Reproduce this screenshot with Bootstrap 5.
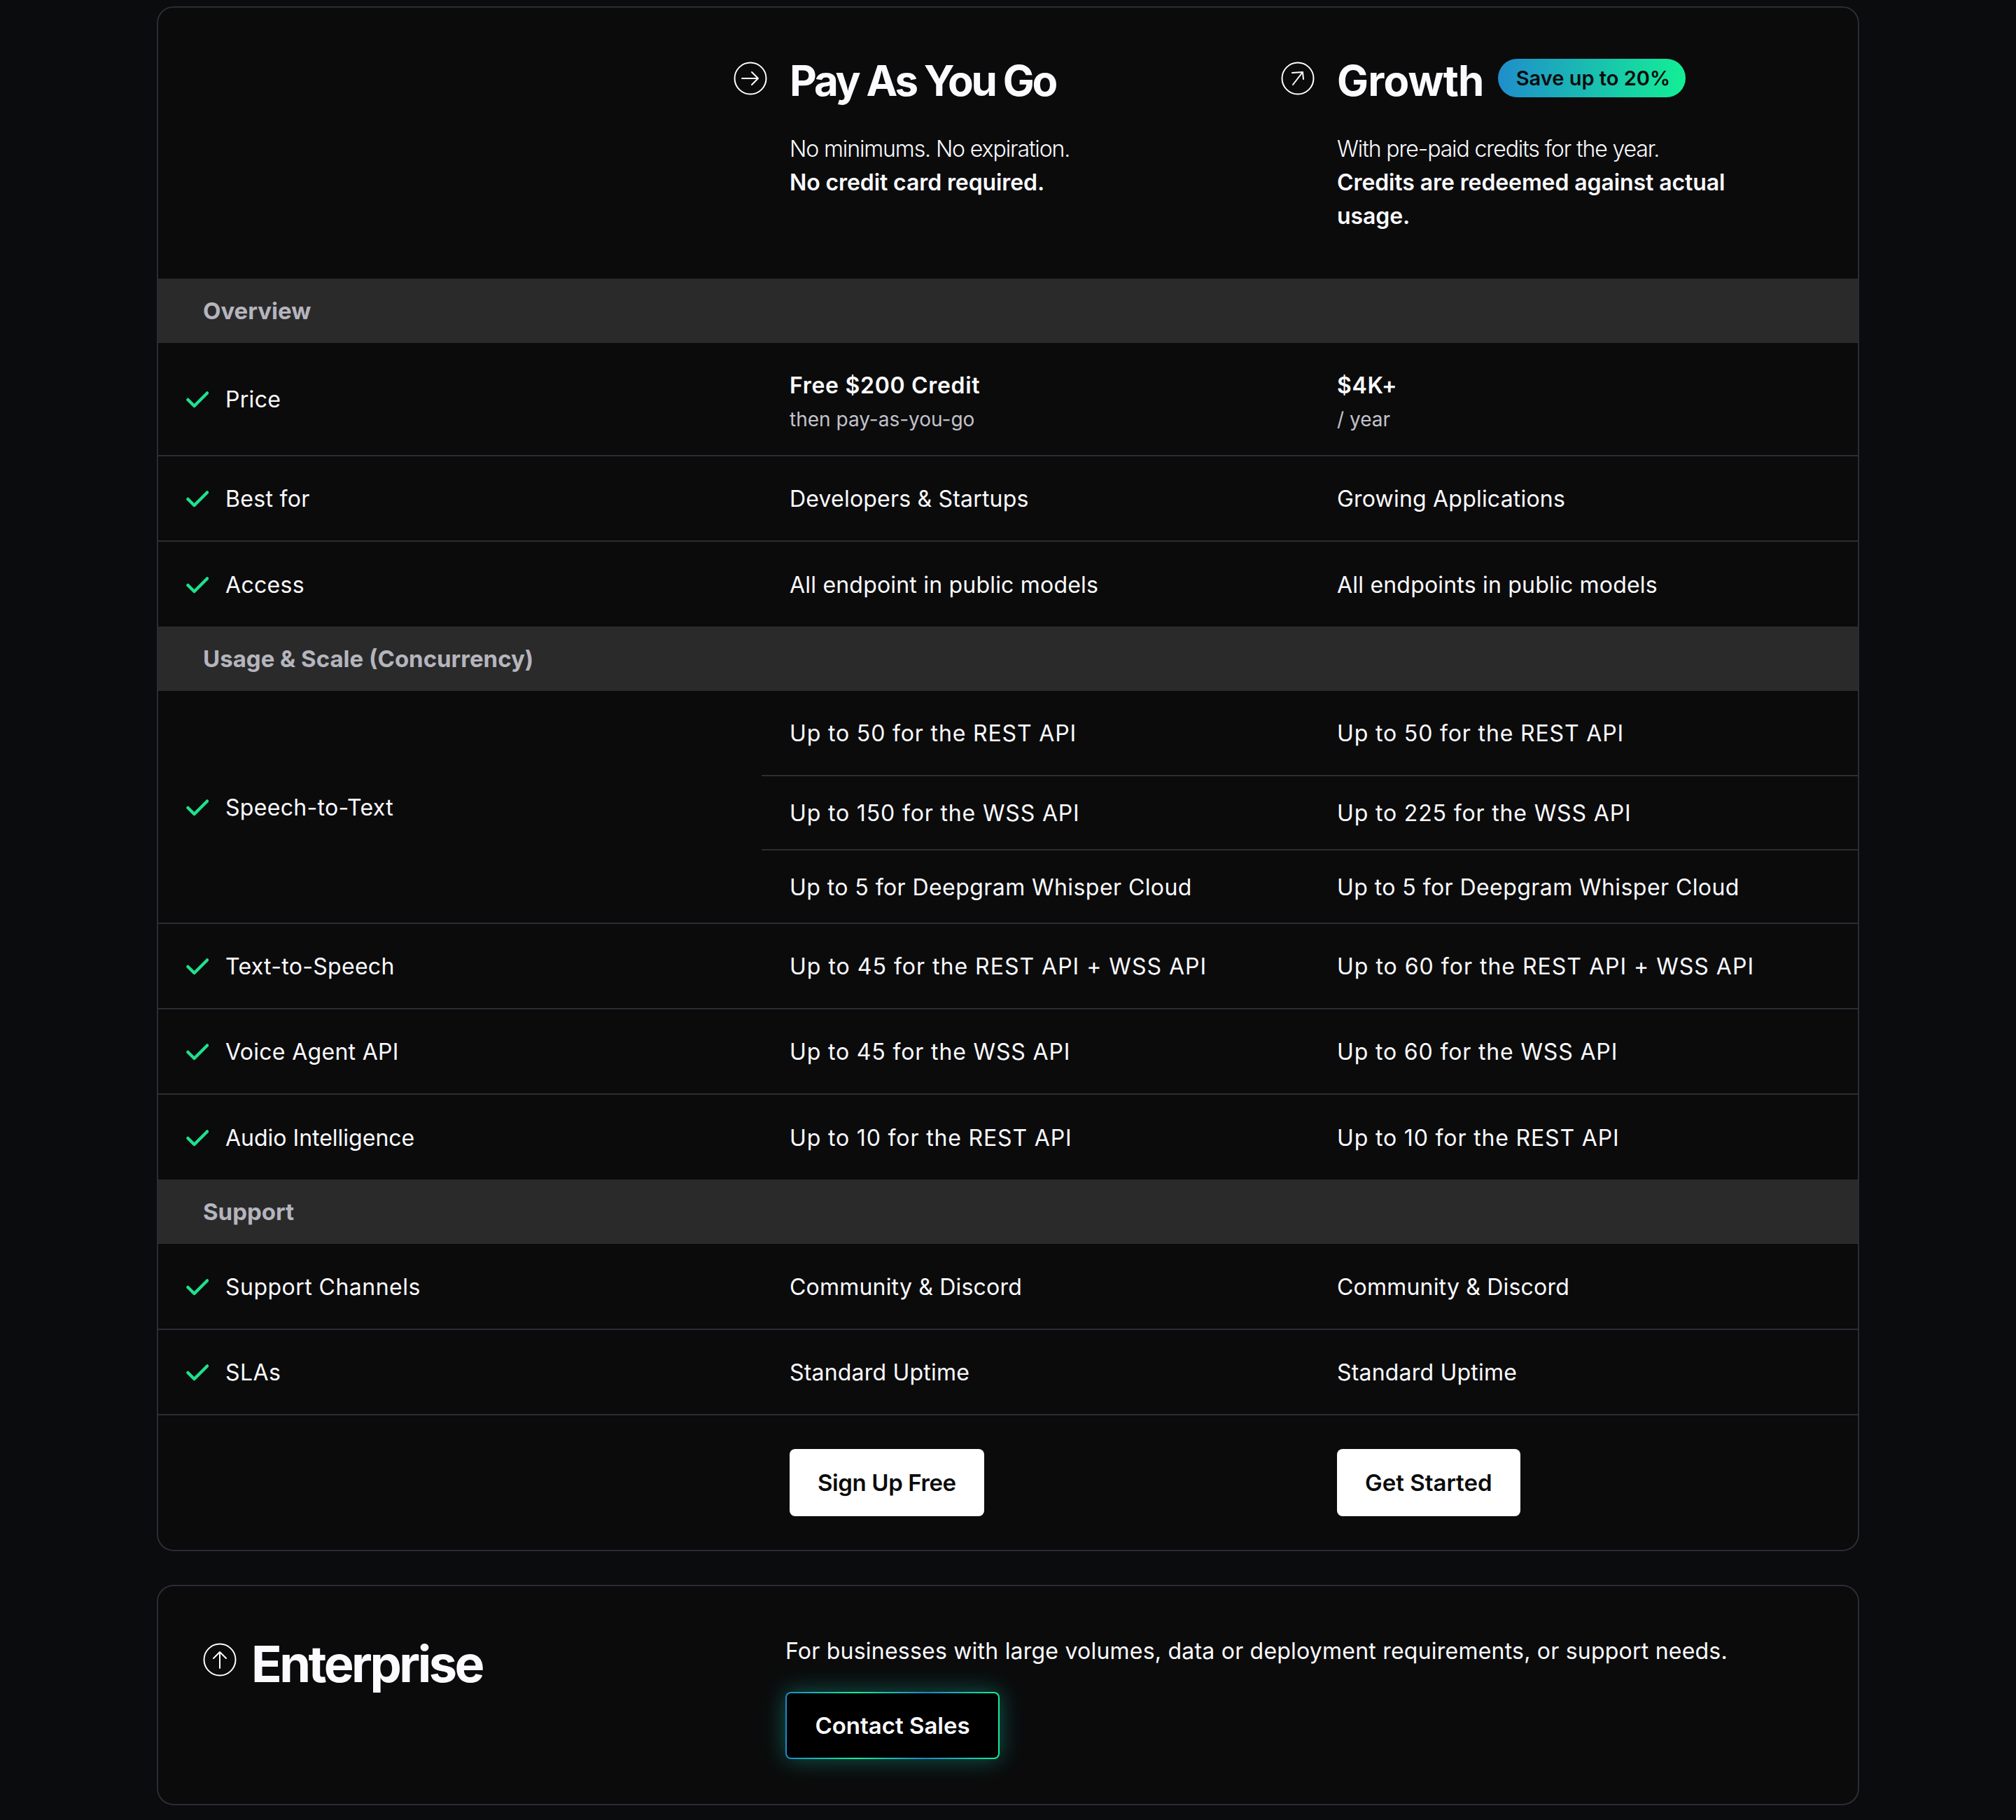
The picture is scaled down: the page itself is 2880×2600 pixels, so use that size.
<!DOCTYPE html>
<html lang="en">
<head>
    <meta charset="UTF-8">
    <meta name="viewport" content="width=device-width, initial-scale=1.0">
    <title>Pricing | Plans</title>
    <link rel="stylesheet" href="https://cdn.jsdelivr.net/npm/bootstrap@5.3.0/dist/css/bootstrap.min.css">
    <style>
        body {
            background: #0b0c0e;
            color: #fbfbff;
            font-family: "Inter", "Liberation Sans", sans-serif;
            font-size: 32px;
            line-height: 48px;
        }

        .page-wrap {
            width: 2432px;
            margin: 0 auto;
            padding-top: 9px;
        }

        .plan-card {
            background: #0b0b0c;
            border: 2px solid #2c2c33;
            border-radius: 24px;
            overflow: hidden;
        }

        /* comparison table */
        .plan-table {
            table-layout: fixed;
            width: 100%;
            margin: 0;
            color: #fbfbff;
            --bs-table-bg: transparent;
            --bs-table-color: #fbfbff;
            letter-spacing: 0.2px;
        }
        .plan-table td, .plan-table th {
            border: 0;
            border-bottom: 2px solid #2c2c33;
            padding: 2px 40px 0;
            vertical-align: middle;
            font-weight: 400;
            box-shadow: none;
        }
        .plan-table tr:last-child td { border-bottom: 0; }
        .col-label { width: 862px; }
        .col-payg { width: 782px; }

        .head-row td {
            height: 387px;
            vertical-align: top;
            padding-top: 68px;
            border-bottom: 0;
        }
        .head-cell { position: relative; }
        .plan-icon { position: absolute; left: -40px; top: 77px; width: 48px; height: 48px; }
        .plan-title {
            font-size: 60px;
            font-weight: 700;
            line-height: 72px;
            height: 72px;
            letter-spacing: -3.2px;
            margin: 0;
        }
        .title-growth { letter-spacing: -0.8px; }
        .plan-note {
            margin: 38px 0 0;
            max-width: 640px;
            font-weight: 300;
            letter-spacing: -1.1px;
        }
        .plan-note b { font-weight: 600; letter-spacing: -0.1px; }

        .save-pill {
            background: linear-gradient(90deg, #1f8ecb, #13ef95);
            color: #0b0b0c;
            font-size: 29px;
            font-weight: 600;
            line-height: 55px;
            padding: 0 22px 0 26px;
            margin-left: 20px;
            letter-spacing: 0;
            position: relative;
            top: -15px;
        }

        .plan-table .section-row td {
            background: #2a2a2b;
            color: #b5b5bd;
            font-weight: 700;
            height: 92px;
            padding: 0 0 0 64px;
            font-size: 33px;
            letter-spacing: 0;
        }
        .section-row td, .before-section td { border-bottom: 0; }

        .h-122 td { height: 122px; }
        .h-161 td { height: 161px; }
        .plan-table .label-cell { letter-spacing: 0.3px; }
        .plan-table .label-tight { letter-spacing: 0; }
        .plan-table .label-wide { letter-spacing: 0.47px; }
        .label-cell svg { width: 32px; height: 24px; margin-right: 24px; vertical-align: -1px; }
        .plan-table .price-cell { padding-top: 10px; }
        .price-main { font-weight: 600; display: block; letter-spacing: 0.7px; }
        .price-sub { color: #c2c2ca; font-size: 28px; display: block; letter-spacing: 0; }
        .plan-table .usage-cell { letter-spacing: 0.85px; }
        .plan-table .usage-wide { letter-spacing: 1px; }
        .plan-table .usage-tight { letter-spacing: 0.43px; }
        .sub-a { height: 121px; }
        .sub-b { height: 106px; }
        .sub-c { height: 105px; }

        .cta-row td { height: 193px; }
        .plan-table .cta-row td { padding-top: 0; }
        .cta-btn {
            background: #fff;
            color: #0b0b0c;
            border: 0;
            border-radius: 8px;
            font-size: 33px;
            font-weight: 600;
            line-height: 48px;
            padding: 24px 40px;
            letter-spacing: 0;
        }
        .cta-tight { letter-spacing: -0.4px; }

        /* enterprise */
        .ent-card { margin-top: 48px; height: 315px; padding-left: 64px; }
        .ent-left { width: 832px; padding-top: 65px; }
        .ent-title { font-size: 72px; font-weight: 700; line-height: 88px; letter-spacing: -3.5px; margin: 2px 0 0; }
        .ent-left svg { width: 48px; height: 48px; margin-right: 5px; }
        .ent-right { padding-top: 69px; letter-spacing: 0.22px; }
        .ent-btn {
            display: block;
            width: 306px;
            margin-top: 34px;
            border: 2px solid transparent;
            border-radius: 8px;
            background: linear-gradient(#000, #000) padding-box,
                        linear-gradient(90deg, #2088c8, #13ef95 33%, #2088c8 66%, #13ef95) border-box;
            box-shadow: 0 0 32px rgba(19, 190, 170, .45);
            color: #fbfbff;
            font-size: 33px;
            font-weight: 600;
            line-height: 48px;
            padding: 22px 0;
            letter-spacing: 0;
        }
        .ent-btn:hover { color: #fff; }
    </style>
</head>
<body>
    <div class="page-wrap">
        <div class="card plan-card">
            <table class="table plan-table">
                <colgroup>
                    <col class="col-label">
                    <col class="col-payg">
                    <col>
                </colgroup>
                <tbody>
                    <tr class="head-row">
                        <td></td>
                        <td class="head-cell">
                            <svg class="plan-icon" viewBox="0 0 48 48" fill="none" stroke="#fff" stroke-width="2" stroke-linecap="round" stroke-linejoin="round"><circle cx="24" cy="24" r="22.5"/><path d="M12 24h23M26 15l9 9-9 9"/></svg>
                            <h2 class="plan-title">Pay As You Go</h2>
                            <p class="plan-note">No minimums. No expiration.<br><b>No credit card required.</b></p>
                        </td>
                        <td class="head-cell">
                            <svg class="plan-icon" viewBox="0 0 48 48" fill="none" stroke="#fff" stroke-width="2" stroke-linecap="round" stroke-linejoin="round"><circle cx="24" cy="24" r="22.5"/><path d="M17 33L31 15M16 16l15-1 1 10"/></svg>
                            <h2 class="plan-title title-growth">Growth<span class="badge rounded-pill save-pill">Save up to 20%</span></h2>
                            <p class="plan-note">With pre-paid credits for the year.<br><b>Credits are redeemed against actual usage.</b></p>
                        </td>
                    </tr>
                    <tr class="section-row"><td colspan="3">Overview</td></tr>
                    <tr class="h-161">
                        <td class="label-cell"><svg viewBox="0 0 32 24" fill="none" stroke="#1fe08f" stroke-width="4.5" stroke-linecap="round" stroke-linejoin="round"><path d="M2.5 12l9 9L30 2.5"/></svg>Price</td>
                        <td class="price-cell"><span class="price-main">Free $200 Credit</span><span class="price-sub">then pay-as-you-go</span></td>
                        <td class="price-cell"><span class="price-main">$4K+</span><span class="price-sub">/ year</span></td>
                    </tr>
                    <tr class="h-122">
                        <td class="label-cell"><svg viewBox="0 0 32 24" fill="none" stroke="#1fe08f" stroke-width="4.5" stroke-linecap="round" stroke-linejoin="round"><path d="M2.5 12l9 9L30 2.5"/></svg>Best for</td>
                        <td>Developers &amp; Startups</td>
                        <td>Growing Applications</td>
                    </tr>
                    <tr class="h-122 before-section">
                        <td class="label-cell"><svg viewBox="0 0 32 24" fill="none" stroke="#1fe08f" stroke-width="4.5" stroke-linecap="round" stroke-linejoin="round"><path d="M2.5 12l9 9L30 2.5"/></svg>Access</td>
                        <td>All endpoint in public models</td>
                        <td>All endpoints in public models</td>
                    </tr>
                    <tr class="section-row"><td colspan="3">Usage &amp; Scale (Concurrency)</td></tr>
                    <tr>
                        <td rowspan="3" class="label-cell"><svg viewBox="0 0 32 24" fill="none" stroke="#1fe08f" stroke-width="4.5" stroke-linecap="round" stroke-linejoin="round"><path d="M2.5 12l9 9L30 2.5"/></svg>Speech-to-Text</td>
                        <td class="sub-a usage-cell">Up to 50 for the REST API</td>
                        <td class="sub-a usage-cell">Up to 50 for the REST API</td>
                    </tr>
                    <tr>
                        <td class="sub-b usage-cell">Up to 150 for the WSS API</td>
                        <td class="sub-b usage-cell">Up to 225 for the WSS API</td>
                    </tr>
                    <tr>
                        <td class="sub-c usage-tight">Up to 5 for Deepgram Whisper Cloud</td>
                        <td class="sub-c usage-tight">Up to 5 for Deepgram Whisper Cloud</td>
                    </tr>
                    <tr class="h-122">
                        <td class="label-cell"><svg viewBox="0 0 32 24" fill="none" stroke="#1fe08f" stroke-width="4.5" stroke-linecap="round" stroke-linejoin="round"><path d="M2.5 12l9 9L30 2.5"/></svg>Text-to-Speech</td>
                        <td class="usage-wide">Up to 45 for the REST API + WSS API</td>
                        <td class="usage-wide">Up to 60 for the REST API + WSS API</td>
                    </tr>
                    <tr class="h-122">
                        <td class="label-cell"><svg viewBox="0 0 32 24" fill="none" stroke="#1fe08f" stroke-width="4.5" stroke-linecap="round" stroke-linejoin="round"><path d="M2.5 12l9 9L30 2.5"/></svg>Voice Agent API</td>
                        <td class="usage-cell">Up to 45 for the WSS API</td>
                        <td class="usage-cell">Up to 60 for the WSS API</td>
                    </tr>
                    <tr class="h-122 before-section">
                        <td class="label-cell label-tight"><svg viewBox="0 0 32 24" fill="none" stroke="#1fe08f" stroke-width="4.5" stroke-linecap="round" stroke-linejoin="round"><path d="M2.5 12l9 9L30 2.5"/></svg>Audio Intelligence</td>
                        <td class="usage-cell">Up to 10 for the REST API</td>
                        <td class="usage-cell">Up to 10 for the REST API</td>
                    </tr>
                    <tr class="section-row"><td colspan="3">Support</td></tr>
                    <tr class="h-122">
                        <td class="label-cell label-wide"><svg viewBox="0 0 32 24" fill="none" stroke="#1fe08f" stroke-width="4.5" stroke-linecap="round" stroke-linejoin="round"><path d="M2.5 12l9 9L30 2.5"/></svg>Support Channels</td>
                        <td>Community &amp; Discord</td>
                        <td>Community &amp; Discord</td>
                    </tr>
                    <tr class="h-122">
                        <td class="label-cell label-wide"><svg viewBox="0 0 32 24" fill="none" stroke="#1fe08f" stroke-width="4.5" stroke-linecap="round" stroke-linejoin="round"><path d="M2.5 12l9 9L30 2.5"/></svg>SLAs</td>
                        <td>Standard Uptime</td>
                        <td>Standard Uptime</td>
                    </tr>
                    <tr class="cta-row">
                        <td></td>
                        <td><a href="#" class="btn cta-btn cta-tight">Sign Up Free</a></td>
                        <td><a href="#" class="btn cta-btn">Get Started</a></td>
                    </tr>
                </tbody>
            </table>
        </div>

        <div class="card plan-card ent-card flex-row">
            <div class="ent-left d-flex align-items-start gap-3">
                <svg class="mt-3" viewBox="0 0 48 48" fill="none" stroke="#fff" stroke-width="2" stroke-linecap="round" stroke-linejoin="round"><circle cx="24" cy="24" r="22.5"/><path d="M24 36V13M15 22l9-9 9 9"/></svg>
                <h2 class="ent-title">Enterprise</h2>
            </div>
            <div class="ent-right">
                <div>For businesses with large volumes, data or deployment requirements, or support needs.</div>
                <a href="#" class="btn ent-btn">Contact Sales</a>
            </div>
        </div>
    </div>
    <script src="https://cdn.jsdelivr.net/npm/bootstrap@5.3.0/dist/js/bootstrap.bundle.min.js"></script>
</body>
</html>
